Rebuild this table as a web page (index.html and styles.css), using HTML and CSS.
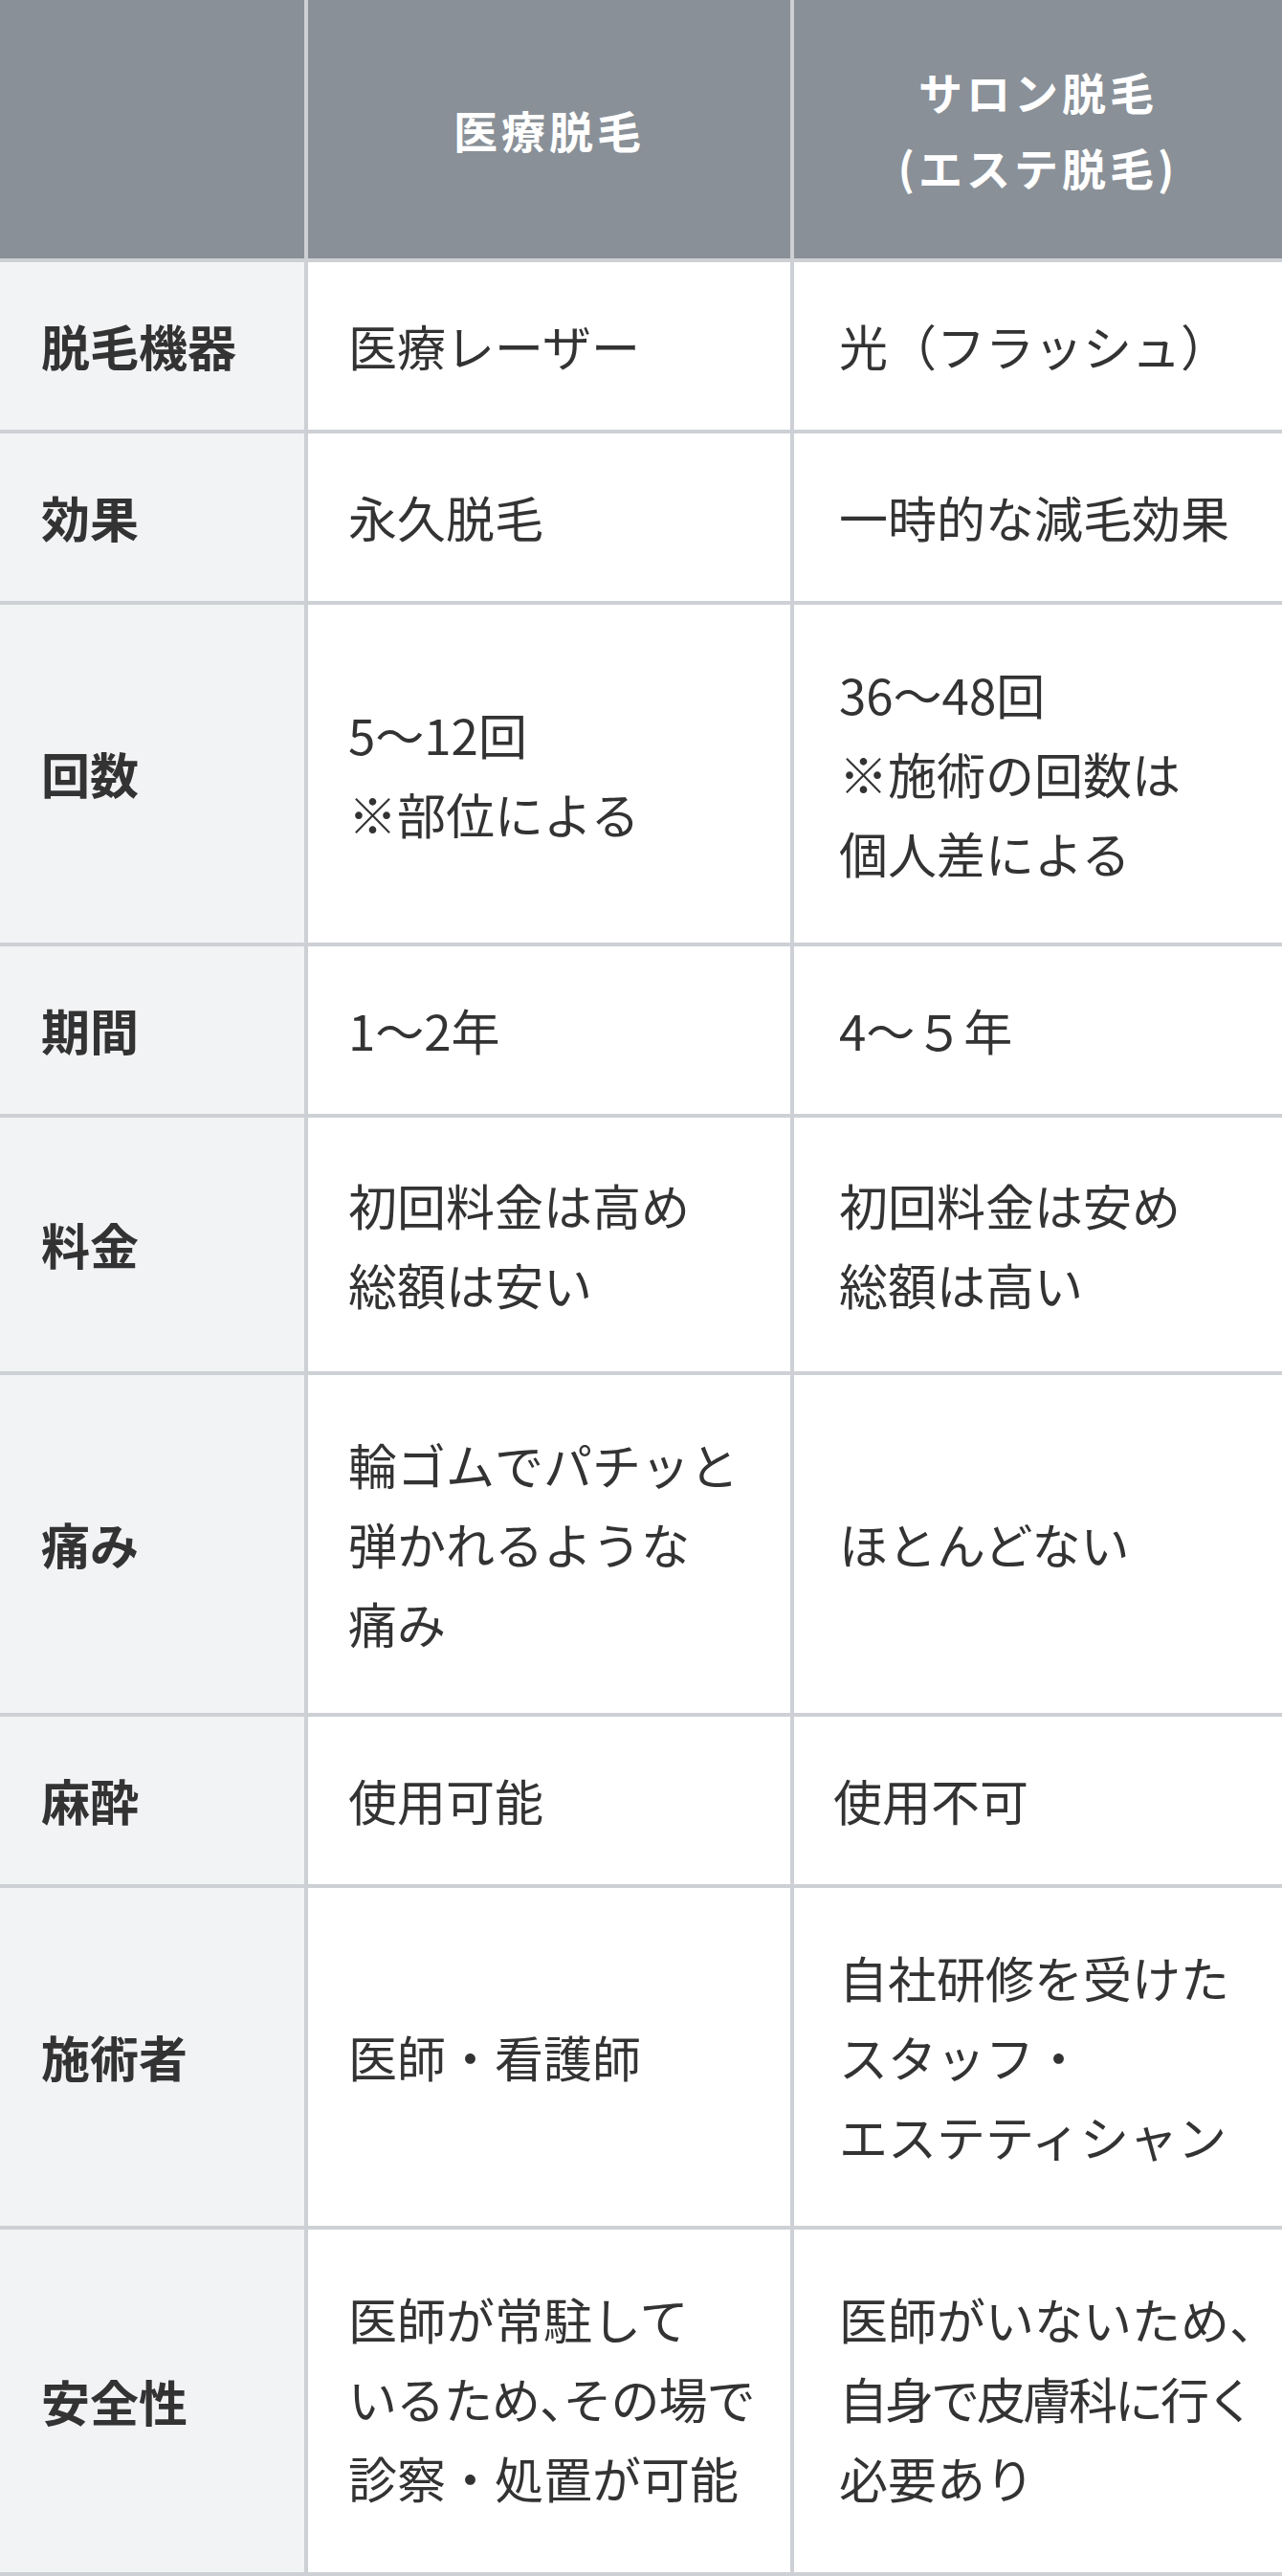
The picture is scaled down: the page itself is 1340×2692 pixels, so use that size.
FILE: index.html
```html
<!DOCTYPE html>
<html lang="ja">
<head>
<meta charset="utf-8">
<title>医療脱毛とサロン脱毛の比較</title>
<link rel="stylesheet" href="styles.css">
</head>
<body>
<div class="compare">
  <div class="cell head"></div>
  <div class="cell head"><p class="txt">医療脱毛</p></div>
  <div class="cell head"><p class="txt">サロン脱毛<br>(エステ脱毛)</p></div>

  <div class="cell label"><p class="txt">脱毛機器</p></div>
  <div class="cell"><p class="txt">医療レーザー</p></div>
  <div class="cell salon"><p class="txt">光（フラッシュ）</p></div>

  <div class="cell label"><p class="txt">効果</p></div>
  <div class="cell"><p class="txt">永久脱毛</p></div>
  <div class="cell salon"><p class="txt">一時的な減毛効果</p></div>

  <div class="cell label"><p class="txt">回数</p></div>
  <div class="cell"><p class="txt">5〜12回<br>※部位による</p></div>
  <div class="cell salon l3"><p class="txt">36〜48回<br>※施術の回数は<br>個人差による</p></div>

  <div class="cell label"><p class="txt">期間</p></div>
  <div class="cell"><p class="txt">1〜2年</p></div>
  <div class="cell salon"><p class="txt">4〜５年</p></div>

  <div class="cell label"><p class="txt">料金</p></div>
  <div class="cell l2"><p class="txt">初回料金は高め<br>総額は安い</p></div>
  <div class="cell salon l2"><p class="txt">初回料金は安め<br>総額は高い</p></div>

  <div class="cell label"><p class="txt">痛み</p></div>
  <div class="cell l3"><p class="txt">輪ゴムでパチッと<br>弾かれるような<br>痛み</p></div>
  <div class="cell salon"><p class="txt">ほとんどない</p></div>

  <div class="cell label"><p class="txt">麻酔</p></div>
  <div class="cell"><p class="txt">使用可能</p></div>
  <div class="cell salon tight"><p class="txt">使用不可</p></div>

  <div class="cell label"><p class="txt">施術者</p></div>
  <div class="cell"><p class="txt">医師・看護師</p></div>
  <div class="cell salon l3"><p class="txt">自社研修を受けた<br>スタッフ・<br>エステティシャン</p></div>

  <div class="cell label"><p class="txt">安全性</p></div>
  <div class="cell l3 last"><p class="txt">医師が常駐して<br><span class="snug">いるため<span class="half">、</span>その場で</span><br>診察・処置が可能</p></div>
  <div class="cell salon l3 last"><p class="txt">医師がいないため<span class="half">、</span><br><span class="narrow">自身で皮膚科に行く</span><br>必要あり</p></div>
</div>
</body>
</html>
```

FILE: styles.css
```css
* {
  box-sizing: border-box;
}

html, body {
  margin: 0;
  padding: 0;
  background: #ffffff;
}

body {
  font-family: "Noto Sans CJK JP", "Noto Sans", sans-serif;
  color: #333333;
}

.compare {
  display: grid;
  grid-template-columns: 318px 504px 510px;
  column-gap: 4px;
  row-gap: 4px;
  width: 1340px;
  background: #cdd0d4;
  padding-bottom: 4px;
}

.cell {
  background: #ffffff;
  display: flex;
  flex-direction: column;
  justify-content: center;
  padding: 46px 0 46px 42px;
  font-size: 51px;
  line-height: 83px;
  white-space: nowrap;
  overflow: hidden;
}

.cell.l2 {
  padding-top: 49.5px;
  padding-bottom: 49.5px;
}

.cell.l3 {
  padding-top: 52px;
  padding-bottom: 52px;
}

.cell.l3.last {
  padding-top: 52px;
  padding-bottom: 57px;
}

.txt {
  margin: 0;
}

.head {
  height: 270px;
  padding: 0;
  background: #899097;
  color: #ffffff;
  font-weight: 700;
  font-size: 46px;
  line-height: 79px;
  letter-spacing: 4px;
  align-items: center;
  text-align: center;
}

.label {
  background: #f2f3f5;
  font-weight: 700;
  padding-left: 43px;
}

.salon {
  padding-left: 47px;
}

.salon.tight {
  padding-left: 41px;
}

.half {
  font-feature-settings: "halt";
}

.snug {
  letter-spacing: -1px;
}

.narrow {
  letter-spacing: -3px;
}
```
